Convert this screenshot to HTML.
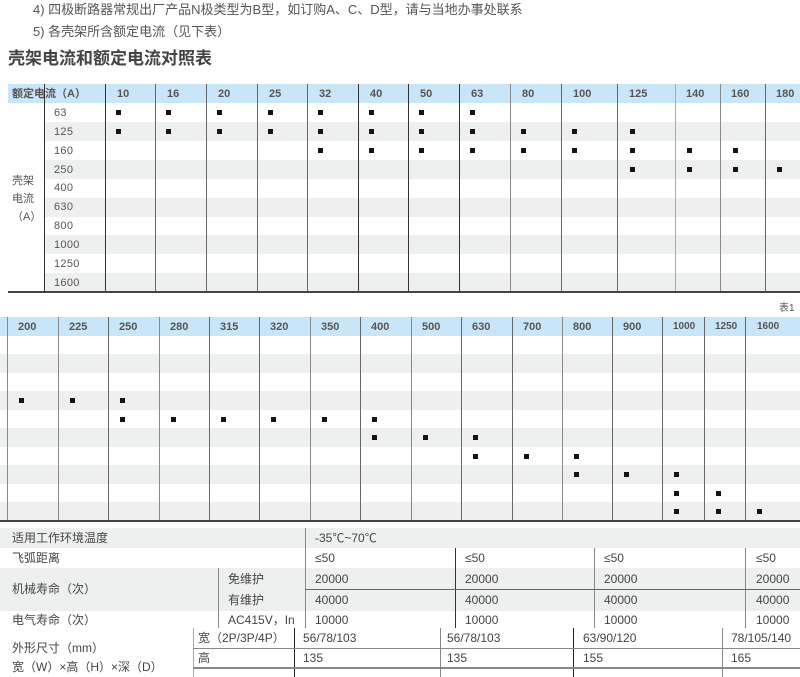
<!DOCTYPE html>
<html><head><meta charset="utf-8"><style>
*{margin:0;padding:0;box-sizing:border-box}
body{width:800px;height:677px;position:relative;overflow:hidden;background:#fff;font-family:"Liberation Sans","Noto Sans CJK SC",sans-serif;color:#444;font-size:12px}
div{position:absolute}
.t{white-space:nowrap;line-height:14px}
.h{font-weight:bold;color:#555;font-size:11px}
.band{background:#c9e6f8}
.g{background:#eef0ef}
.v{width:1px;background:#666}
.hl{height:1px;background:#666}
.d{width:5px;height:5px;background:#1a1212}
.n{font-size:11px;color:#555;letter-spacing:.3px}
</style></head><body>
<div class="t" style="left:33px;top:3px;font-size:13px;color:#555">4) 四极断路器常规出厂产品N极类型为B型，如订购A、C、D型，请与当地办事处联系</div>
<div class="t" style="left:33px;top:25px;font-size:13px;color:#555">5) 各壳架所含额定电流（见下表）</div>
<div class="t" style="left:8px;top:49px;font-size:17px;font-weight:bold;color:#444;line-height:20px">壳架电流和额定电流对照表</div>

<!-- table 1 -->
<div class="band" style="left:8px;top:84px;width:792px;height:19px"></div>
<div class="g" style="left:44px;top:122px;width:756px;height:19px"></div>
<div class="g" style="left:44px;top:160px;width:756px;height:19px"></div>
<div class="g" style="left:44px;top:198px;width:756px;height:19px"></div>
<div class="g" style="left:44px;top:235px;width:756px;height:19px"></div>
<div class="g" style="left:44px;top:273px;width:756px;height:19px"></div>
<div class="t h" style="left:12px;top:87px">额定电流（A）</div>
<div class="t h" style="left:117px;top:87px">10</div><div class="t h" style="left:167px;top:87px">16</div><div class="t h" style="left:218px;top:87px">20</div><div class="t h" style="left:269px;top:87px">25</div><div class="t h" style="left:319px;top:87px">32</div><div class="t h" style="left:370px;top:87px">40</div><div class="t h" style="left:420px;top:87px">50</div><div class="t h" style="left:471px;top:87px">63</div><div class="t h" style="left:522px;top:87px">80</div><div class="t h" style="left:573px;top:87px">100</div><div class="t h" style="left:629px;top:87px">125</div><div class="t h" style="left:686px;top:87px">140</div><div class="t h" style="left:731px;top:87px">160</div><div class="t h" style="left:776px;top:87px">180</div>
<div class="t n" style="left:54px;top:106px">63</div><div class="t n" style="left:54px;top:125px">125</div><div class="t n" style="left:54px;top:144px">160</div><div class="t n" style="left:54px;top:163px">250</div><div class="t n" style="left:54px;top:181px">400</div><div class="t n" style="left:54px;top:200px">630</div><div class="t n" style="left:54px;top:219px">800</div><div class="t n" style="left:54px;top:238px">1000</div><div class="t n" style="left:54px;top:257px">1250</div><div class="t n" style="left:54px;top:276px">1600</div>
<div class="t" style="left:12px;top:174px;font-size:11px;color:#555">壳架</div>
<div class="t" style="left:12px;top:192px;font-size:11px;color:#555">电流</div>
<div class="t" style="left:12px;top:210px;font-size:11px;color:#555">（A）</div>
<div class="v" style="left:44px;top:84px;height:208px;background:#333"></div>
<div class="v" style="left:105px;top:84px;height:208px;background:#333"></div>
<div class="v" style="left:155px;top:84px;height:208px"></div><div class="v" style="left:206px;top:84px;height:208px"></div><div class="v" style="left:257px;top:84px;height:208px"></div><div class="v" style="left:307px;top:84px;height:208px"></div><div class="v" style="left:358px;top:84px;height:208px;background:#333"></div><div class="v" style="left:408px;top:84px;height:208px;background:#333"></div><div class="v" style="left:459px;top:84px;height:208px;background:#333"></div><div class="v" style="left:510px;top:84px;height:208px;background:#888"></div><div class="v" style="left:561px;top:84px;height:208px"></div><div class="v" style="left:617px;top:84px;height:208px"></div><div class="v" style="left:675px;top:84px;height:208px;background:#aaa"></div><div class="v" style="left:720px;top:84px;height:208px;background:#888"></div><div class="v" style="left:765px;top:84px;height:208px"></div>
<div class="hl" style="left:8px;top:291px;width:792px;height:2px;background:#444"></div>
<div class="d" style="left:116px;top:110px"></div><div class="d" style="left:166px;top:110px"></div><div class="d" style="left:217px;top:110px"></div><div class="d" style="left:268px;top:110px"></div><div class="d" style="left:318px;top:110px"></div><div class="d" style="left:369px;top:110px"></div><div class="d" style="left:419px;top:110px"></div><div class="d" style="left:470px;top:110px"></div>
<div class="d" style="left:116px;top:129px"></div><div class="d" style="left:166px;top:129px"></div><div class="d" style="left:217px;top:129px"></div><div class="d" style="left:268px;top:129px"></div><div class="d" style="left:318px;top:129px"></div><div class="d" style="left:369px;top:129px"></div><div class="d" style="left:419px;top:129px"></div><div class="d" style="left:470px;top:129px"></div><div class="d" style="left:521px;top:129px"></div><div class="d" style="left:572px;top:129px"></div><div class="d" style="left:630px;top:129px"></div>
<div class="d" style="left:318px;top:148px"></div><div class="d" style="left:369px;top:148px"></div><div class="d" style="left:419px;top:148px"></div><div class="d" style="left:470px;top:148px"></div><div class="d" style="left:521px;top:148px"></div><div class="d" style="left:572px;top:148px"></div><div class="d" style="left:630px;top:148px"></div><div class="d" style="left:687px;top:148px"></div><div class="d" style="left:733px;top:148px"></div>
<div class="d" style="left:630px;top:167px"></div><div class="d" style="left:687px;top:167px"></div><div class="d" style="left:733px;top:167px"></div><div class="d" style="left:777px;top:167px"></div>
<div class="t" style="left:779px;top:302px;font-size:10px;color:#555">表1</div>

<!-- table 2 -->
<div class="band" style="left:0;top:317px;width:800px;height:19px"></div>
<div class="g" style="left:0;top:354px;width:800px;height:19px"></div>
<div class="g" style="left:0;top:391px;width:800px;height:19px"></div>
<div class="g" style="left:0;top:428px;width:800px;height:19px"></div>
<div class="g" style="left:0;top:465px;width:800px;height:19px"></div>
<div class="g" style="left:0;top:502px;width:800px;height:19px"></div>
<div class="t h" style="left:18px;top:320px">200</div><div class="t h" style="left:69px;top:320px">225</div><div class="t h" style="left:119px;top:320px">250</div><div class="t h" style="left:170px;top:320px">280</div><div class="t h" style="left:220px;top:320px">315</div><div class="t h" style="left:270px;top:320px">320</div><div class="t h" style="left:321px;top:320px">350</div><div class="t h" style="left:371px;top:320px">400</div><div class="t h" style="left:422px;top:320px">500</div><div class="t h" style="left:472px;top:320px">630</div><div class="t h" style="left:523px;top:320px">700</div><div class="t h" style="left:573px;top:320px">800</div><div class="t h" style="left:623px;top:320px">900</div><div class="t h" style="left:673px;top:320px;font-size:10px">1000</div><div class="t h" style="left:715px;top:320px;font-size:10px">1250</div><div class="t h" style="left:757px;top:320px;font-size:10px">1600</div>
<div class="v" style="left:7px;top:317px;height:204px;background:#888"></div><div class="v" style="left:58px;top:317px;height:204px;background:#888"></div><div class="v" style="left:108px;top:317px;height:204px"></div><div class="v" style="left:159px;top:317px;height:204px;background:#888"></div><div class="v" style="left:209px;top:317px;height:204px"></div><div class="v" style="left:259px;top:317px;height:204px"></div><div class="v" style="left:310px;top:317px;height:204px;background:#888"></div><div class="v" style="left:360px;top:317px;height:204px"></div><div class="v" style="left:411px;top:317px;height:204px;background:#888"></div><div class="v" style="left:461px;top:317px;height:204px"></div><div class="v" style="left:512px;top:317px;height:204px"></div><div class="v" style="left:562px;top:317px;height:204px;background:#888"></div><div class="v" style="left:612px;top:317px;height:204px"></div><div class="v" style="left:662px;top:317px;height:204px"></div><div class="v" style="left:704px;top:317px;height:204px"></div><div class="v" style="left:745px;top:317px;height:204px"></div>
<div class="hl" style="left:0;top:520px;width:800px;height:2px;background:#444"></div>
<div class="d" style="left:19px;top:398px"></div><div class="d" style="left:70px;top:398px"></div><div class="d" style="left:120px;top:398px"></div>
<div class="d" style="left:120px;top:417px"></div><div class="d" style="left:171px;top:417px"></div><div class="d" style="left:221px;top:417px"></div><div class="d" style="left:271px;top:417px"></div><div class="d" style="left:322px;top:417px"></div><div class="d" style="left:372px;top:417px"></div>
<div class="d" style="left:372px;top:435px"></div><div class="d" style="left:423px;top:435px"></div><div class="d" style="left:473px;top:435px"></div>
<div class="d" style="left:473px;top:454px"></div><div class="d" style="left:524px;top:454px"></div><div class="d" style="left:574px;top:454px"></div>
<div class="d" style="left:574px;top:472px"></div><div class="d" style="left:624px;top:472px"></div><div class="d" style="left:674px;top:472px"></div>
<div class="d" style="left:674px;top:491px"></div><div class="d" style="left:716px;top:491px"></div>
<div class="d" style="left:674px;top:509px"></div><div class="d" style="left:716px;top:509px"></div><div class="d" style="left:757px;top:509px"></div>

<!-- bottom table -->
<div class="g" style="left:0;top:528px;width:800px;height:20px"></div>
<div class="g" style="left:0;top:568px;width:800px;height:43px"></div>
<div class="t" style="left:12px;top:531px">适用工作环境温度</div>
<div class="t" style="left:12px;top:551px">飞弧距离</div>
<div class="t" style="left:12px;top:582px">机械寿命（次）</div>
<div class="t" style="left:12px;top:613px">电气寿命（次）</div>
<div class="t" style="left:12px;top:641px">外形尺寸（mm）</div>
<div class="t" style="left:12px;top:660px">宽（W）×高（H）×深（D）</div>
<div class="t" style="left:228px;top:572px">免维护</div>
<div class="t" style="left:228px;top:593px">有维护</div>
<div class="t" style="left:228px;top:613px">AC415V，In</div>
<div class="t" style="left:315px;top:531px">-35℃~70℃</div>
<div class="t" style="left:315px;top:551px">≤50</div><div class="t" style="left:465px;top:551px">≤50</div><div class="t" style="left:604px;top:551px">≤50</div><div class="t" style="left:756px;top:551px">≤50</div>
<div class="t" style="left:315px;top:572px">20000</div><div class="t" style="left:465px;top:572px">20000</div><div class="t" style="left:604px;top:572px">20000</div><div class="t" style="left:756px;top:572px">20000</div>
<div class="t" style="left:315px;top:593px">40000</div><div class="t" style="left:465px;top:593px">40000</div><div class="t" style="left:604px;top:593px">40000</div><div class="t" style="left:756px;top:593px">40000</div>
<div class="t" style="left:315px;top:613px">10000</div><div class="t" style="left:465px;top:613px">10000</div><div class="t" style="left:604px;top:613px">10000</div><div class="t" style="left:756px;top:613px">10000</div>
<div class="t" style="left:198px;top:631px">宽（2P/3P/4P）</div>
<div class="t" style="left:198px;top:651px">高</div>
<div class="t" style="left:303px;top:631px">56/78/103</div><div class="t" style="left:447px;top:631px">56/78/103</div><div class="t" style="left:583px;top:631px">63/90/120</div><div class="t" style="left:731px;top:631px">78/105/140</div>
<div class="t" style="left:303px;top:651px">135</div><div class="t" style="left:447px;top:651px">135</div><div class="t" style="left:583px;top:651px">155</div><div class="t" style="left:731px;top:651px">165</div>
<div class="v" style="left:305px;top:528px;height:100px;background:#888"></div>
<div class="v" style="left:218px;top:568px;height:60px;background:#888"></div>
<div class="v" style="left:455px;top:548px;height:80px;background:#333"></div>
<div class="v" style="left:594px;top:548px;height:80px;background:#888"></div>
<div class="v" style="left:745px;top:548px;height:80px;background:#888"></div>
<div class="hl" style="left:305px;top:589px;width:495px"></div>
<div class="v" style="left:193px;top:628px;height:49px;background:#aaa"></div>
<div class="v" style="left:294px;top:628px;height:49px;background:#222"></div>
<div class="v" style="left:440px;top:628px;height:49px;background:#888"></div>
<div class="v" style="left:573px;top:628px;height:49px;background:#222"></div>
<div class="v" style="left:722px;top:628px;height:49px;background:#888"></div>
<div class="hl" style="left:193px;top:648px;width:607px;background:#888"></div>
<div class="hl" style="left:193px;top:667px;width:607px;height:2px;background:#888"></div>
</body></html>
